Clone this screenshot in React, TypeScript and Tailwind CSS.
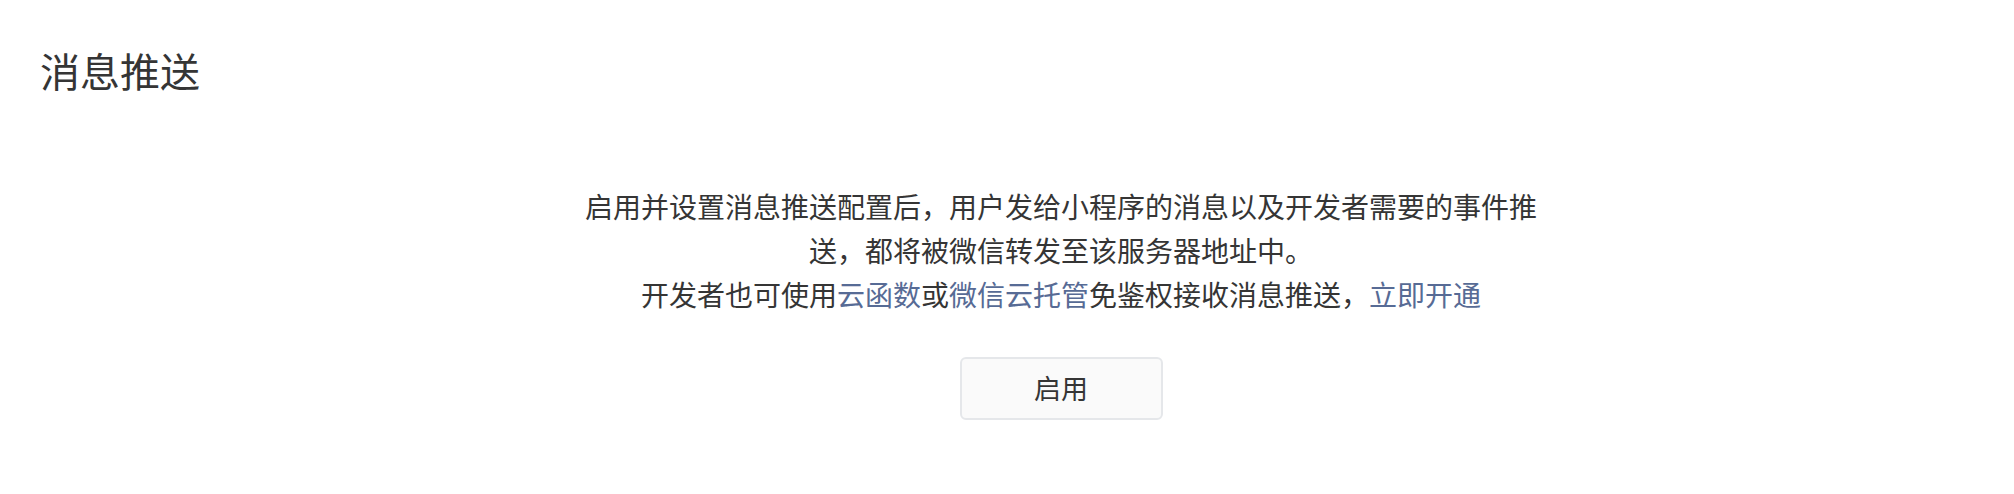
export default function App() {
  return (
    <div className="min-h-[494px] w-full bg-white font-['Noto_Sans_CJK_SC','Noto_Sans',sans-serif] text-[#353535]">
      {/* 页面标题 */}
      <h2 className="px-[40px] pt-[42px] text-[40px] font-normal leading-[56px]">消息推送</h2>

      {/* 说明 + 启用按钮 */}
      <div className="flex flex-col items-center pl-[108px] pt-[86px]">
        <div className="max-w-[966px] text-center text-[28px] leading-[44px]">
          <p>启用并设置消息推送配置后，用户发给小程序的消息以及开发者需要的事件推送，都将被微信转发至该服务器地址中。</p>
          <p>
            开发者也可使用
            <a className="text-[#576b95]">云函数</a>或
            <a className="text-[#576b95]">微信云托管</a>
            免鉴权接收消息推送，
            <a className="text-[#576b95]">立即开通</a>
          </p>
        </div>
        <button className="mt-[41px] h-[63px] w-[203px] rounded-[6px] border-2 border-[#e5e7ea] bg-[#fafafa] text-[27px] text-[#353535]">
          启用
        </button>
      </div>
    </div>
  );
}
